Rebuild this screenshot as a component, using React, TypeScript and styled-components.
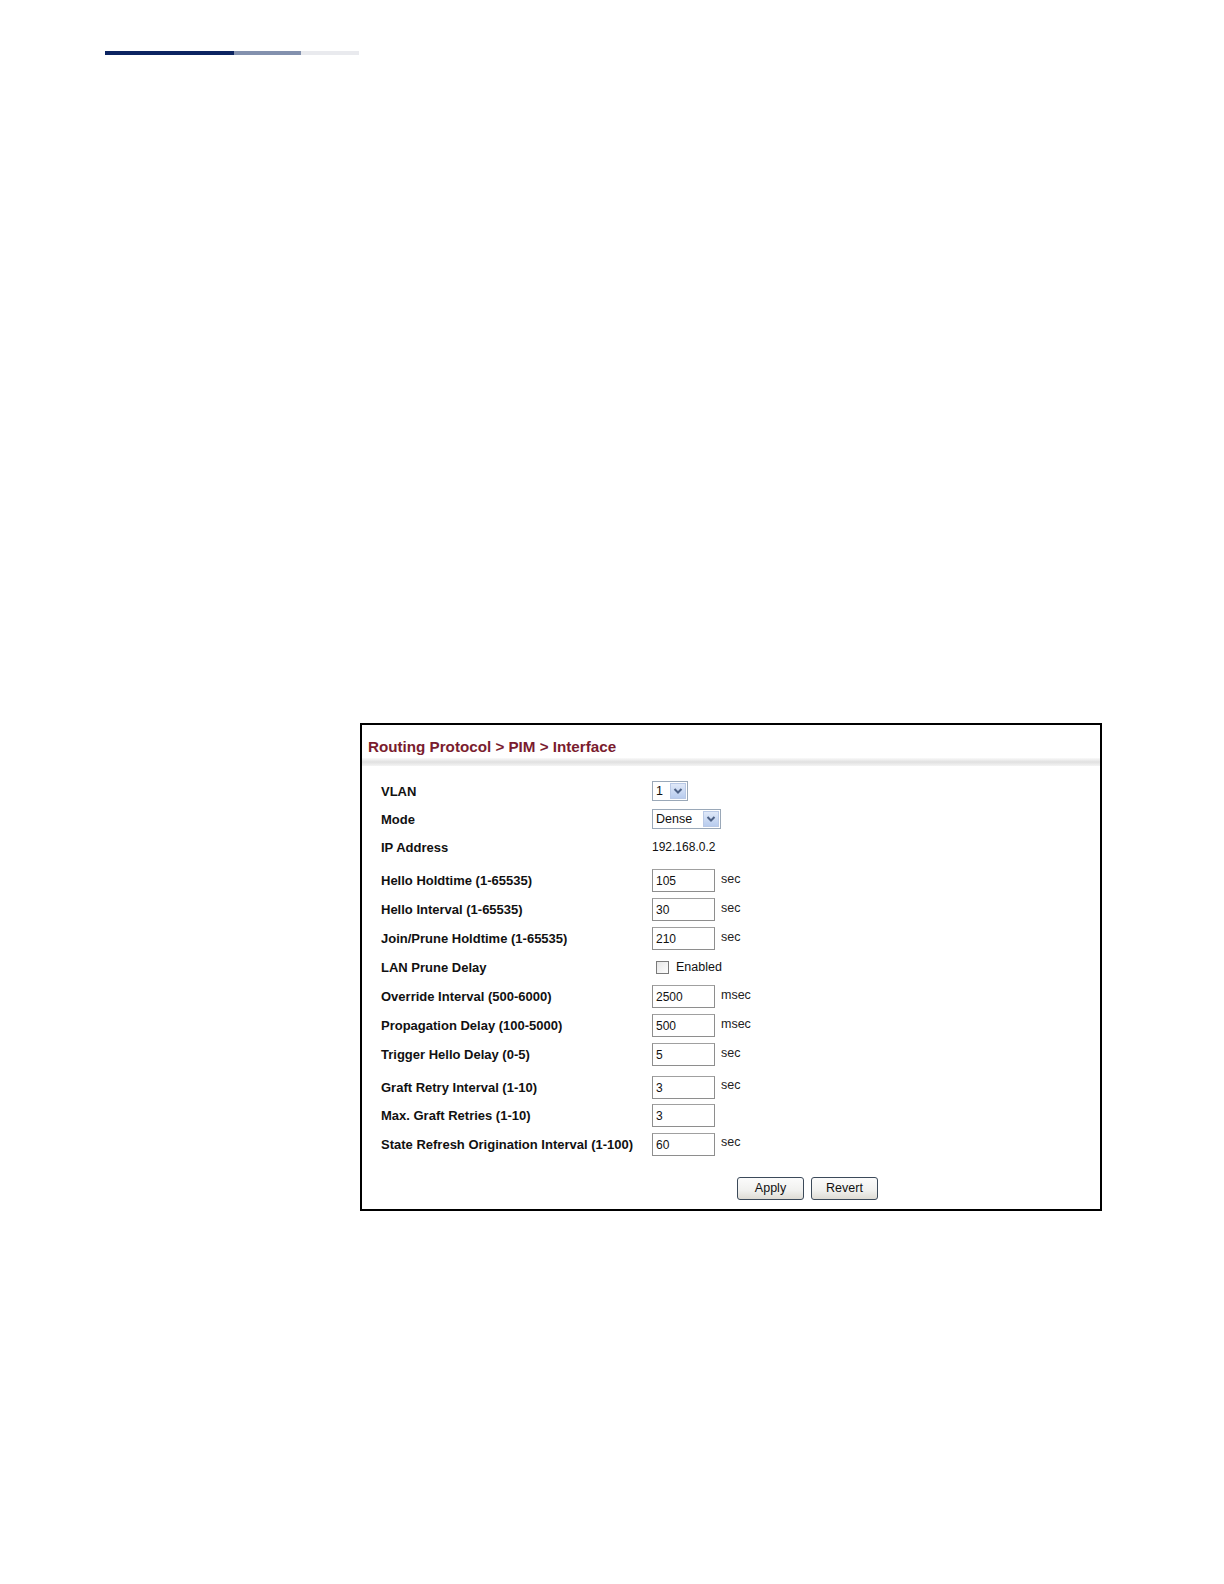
import React from "react";
import styled, { createGlobalStyle } from "styled-components";

const Global = createGlobalStyle`
  html, body { margin: 0; padding: 0; background: #ffffff; }
  body { font-family: "Liberation Sans", Arial, sans-serif; }
`;

const Page = styled.div`
  box-sizing: border-box;
  padding-top: 51px;
  padding-left: 105px;
  padding-bottom: 370px;
`;

const Rule = styled.div`
  display: flex;
  height: 4px;
  width: 254px;
`;

const RuleSeg = styled.div<{ $w: number; $c: string }>`
  width: ${(p) => p.$w}px;
  background: ${(p) => p.$c};
`;

const Panel = styled.div`
  margin-top: 668px;
  margin-left: 255px;
  width: 742px;
  height: 488px;
  box-sizing: border-box;
  border: 2px solid #000;
  background: #fff;
  display: flex;
  flex-direction: column;
`;

const Title = styled.div`
  padding: 13px 0 0 6px;
  height: 20px;
  font-family: "Liberation Sans", Arial, sans-serif;
  font-size: 15.2px;
  font-weight: bold;
  color: #7a1c2e;
`;

const TitleBar = styled.div`
  height: 8px;
  background: linear-gradient(#fafafa, #e0e0e0 50%, #f4f4f4);
`;

const Form = styled.div`
  padding: 11px 0 0 19px;
  display: flex;
  flex-direction: column;
`;

const Group = styled.div<{ $gap: number }>`
  margin-top: ${(p) => p.$gap}px;
  display: flex;
  flex-direction: column;
`;

const Row = styled.div<{ $h: number }>`
  display: grid;
  grid-template-columns: 271px auto;
  align-items: center;
  height: ${(p) => p.$h}px;
`;

const Label = styled.div`
  font-size: 13px;
  font-weight: bold;
  color: #111;
  white-space: nowrap;
`;

const Value = styled.div`
  display: flex;
  align-items: center;
  font-size: 12px;
  color: #111;
`;

const TextBox = styled.div`
  width: 63px;
  height: 23px;
  box-sizing: border-box;
  border: 1px solid #8e8e8e;
  border-top-color: #a0a0a0;
  padding: 4px 0 0 3px;
  font-size: 12px;
  color: #111;
  background: #fff;
`;

const Unit = styled.span`
  margin-left: 6px;
  font-size: 12.5px;
  color: #222;
  margin-top: -4px;
`;

const Select = styled.div<{ $w: number }>`
  width: ${(p) => p.$w}px;
  height: 20px;
  box-sizing: border-box;
  border: 1px solid #9aa8b8;
  display: flex;
  align-items: center;
  justify-content: space-between;
  padding: 0 1px 0 3px;
  font-size: 12.5px;
  color: #111;
  background: #fff;
`;

const Arrow = styled.div`
  width: 16px;
  height: 16px;
  box-sizing: border-box;
  border: 1px solid #b9c9e6;
  background: linear-gradient(#dfe8f8, #b8ccee);
  display: flex;
  align-items: center;
  justify-content: center;
`;

const Check = styled.div`
  width: 13px;
  height: 13px;
  box-sizing: border-box;
  border: 1px solid #7a7a7a;
  background: linear-gradient(135deg, #e6e6e6, #fdfdfd);
  margin-left: 4px;
  margin-right: 7px;
`;

const CheckText = styled.span`
  margin-top: -2px;
  font-size: 12.5px;
`;

const Buttons = styled.div`
  display: flex;
  gap: 7px;
  padding-left: 356px;
  margin-top: 18px;
`;

const Button = styled.div<{ $w: number }>`
  width: ${(p) => p.$w}px;
  height: 23px;
  box-sizing: border-box;
  border: 1px solid #3c4a5a;
  border-radius: 3px;
  background: linear-gradient(#fbfbfb, #f0f0ee 60%, #dedbd4);
  display: flex;
  align-items: center;
  justify-content: center;
  font-size: 12.5px;
  color: #111;
`;

const Chevron = () => (
  <svg width="10" height="8" viewBox="0 0 10 8">
    <path d="M1.5 2 L5 5.5 L8.5 2" fill="none" stroke="#4d6185" strokeWidth="2" />
  </svg>
);

type Field = { label: string; value: string; unit?: string };

const g2: Field[] = [
  { label: "Hello Holdtime (1-65535)", value: "105", unit: "sec" },
  { label: "Hello Interval (1-65535)", value: "30", unit: "sec" },
  { label: "Join/Prune Holdtime (1-65535)", value: "210", unit: "sec" },
];
const g2b: Field[] = [
  { label: "Override Interval (500-6000)", value: "2500", unit: "msec" },
  { label: "Propagation Delay (100-5000)", value: "500", unit: "msec" },
  { label: "Trigger Hello Delay (0-5)", value: "5", unit: "sec" },
];
const g3: Field[] = [
  { label: "Graft Retry Interval (1-10)", value: "3", unit: "sec" },
  { label: "Max. Graft Retries (1-10)", value: "3" },
  { label: "State Refresh Origination Interval (1-100)", value: "60", unit: "sec" },
];

const InputRow = ({ f, h }: { f: Field; h: number }) => (
  <Row $h={h}>
    <Label>{f.label}</Label>
    <Value>
      <TextBox>{f.value}</TextBox>
      {f.unit && <Unit>{f.unit}</Unit>}
    </Value>
  </Row>
);

export default function App() {
  return (
    <>
      <Global />
      <Page>
        <Rule>
          <RuleSeg $w={129} $c="#0c2461" />
          <RuleSeg $w={67} $c="#8391ae" />
          <RuleSeg $w={58} $c="#e9eaee" />
        </Rule>
        <Panel>
          <Title>Routing Protocol &gt; PIM &gt; Interface</Title>
          <TitleBar />
          <Form>
            <Group $gap={0}>
              <Row $h={28}>
                <Label>VLAN</Label>
                <Value>
                  <Select $w={36}>
                    1
                    <Arrow>
                      <Chevron />
                    </Arrow>
                  </Select>
                </Value>
              </Row>
              <Row $h={28}>
                <Label>Mode</Label>
                <Value>
                  <Select $w={69}>
                    Dense
                    <Arrow>
                      <Chevron />
                    </Arrow>
                  </Select>
                </Value>
              </Row>
              <Row $h={28}>
                <Label>IP Address</Label>
                <Value>192.168.0.2</Value>
              </Row>
            </Group>
            <Group $gap={5}>
              {g2.map((f) => (
                <InputRow key={f.label} f={f} h={29} />
              ))}
              <Row $h={29}>
                <Label>LAN Prune Delay</Label>
                <Value>
                  <Check />
                  <CheckText>Enabled</CheckText>
                </Value>
              </Row>
              {g2b.map((f) => (
                <InputRow key={f.label} f={f} h={29} />
              ))}
            </Group>
            <Group $gap={4}>
              {g3.map((f) => (
                <InputRow key={f.label} f={f} h={28.5} />
              ))}
            </Group>
            <Buttons>
              <Button $w={67}>Apply</Button>
              <Button $w={67}>Revert</Button>
            </Buttons>
          </Form>
        </Panel>
      </Page>
    </>
  );
}
